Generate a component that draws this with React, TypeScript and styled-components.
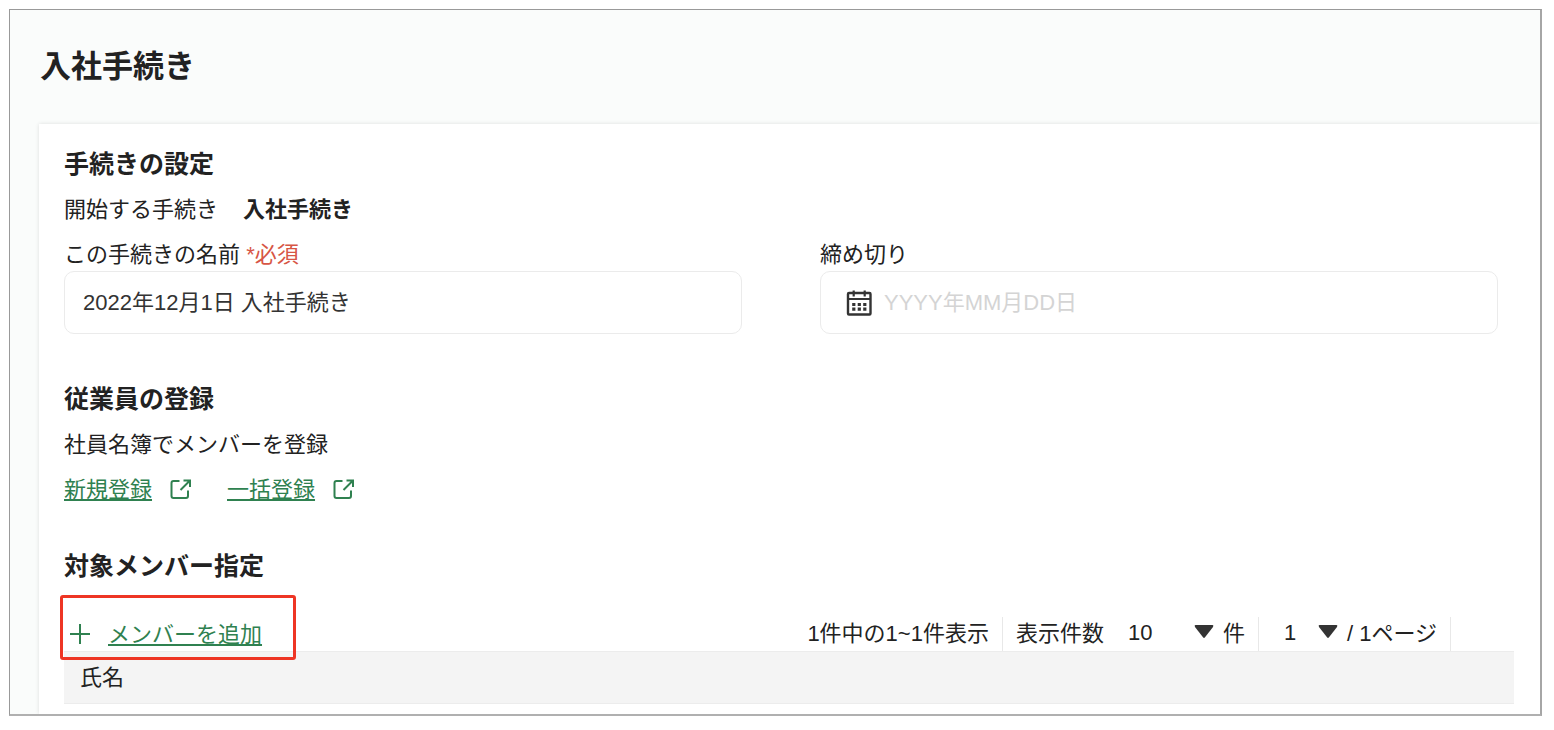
import React from "react";
import styled, { createGlobalStyle } from "styled-components";

const GlobalStyle = createGlobalStyle`
  *, *::before, *::after { box-sizing: border-box; }
  body {
    margin: 0;
    background: #fff;
    color: #222;
    font-family: "Liberation Sans", "Noto Sans CJK JP", sans-serif;
    font-size: 22px;
    line-height: 33px;
  }
  input, select, button { font: inherit; color: inherit; }
`;

const Frame = styled.main`
  margin: 9px 12px 14px 9px;
  border: 1px solid #999;
  border-right: 2px solid #a6a6a6;
  border-bottom: 2px solid #b0b0b0;
  background: #fafcfb;
  overflow: hidden;
`;

const Header = styled.header`
  padding: 33px 30px;
`;

const PageTitle = styled.h1`
  margin: 0;
  font-size: 31px;
  line-height: 48px;
  font-weight: 700;
`;

const Card = styled.div`
  margin-left: 29px;
  padding: 24px 26px 10px 25px;
  background: #fff;
  box-shadow: 0 0 4px rgba(0, 0, 0, 0.12);
`;

const Section = styled.section<{ $space: number }>`
  display: flex;
  flex-direction: column;
  gap: 12px;
  margin-bottom: ${(p) => p.$space}px;
`;

const SectionTitle = styled.h2`
  margin: 0;
  font-size: 25px;
  line-height: 33px;
  font-weight: 700;
`;

const Text = styled.p`
  margin: 0;
`;

const Summary = styled.dl`
  display: flex;
  gap: 25px;
  margin: 0;

  dd {
    margin: 0;
    font-weight: 700;
  }
`;

const Fields = styled.div`
  display: flex;
  gap: 78px;
  margin-right: 16px;
`;

const Field = styled.div`
  flex: 1;
  min-width: 0;
`;

const Label = styled.label`
  display: block;
`;

const Required = styled.span`
  color: #d75645;
`;

const InputBox = styled.div<{ $indent: number }>`
  display: flex;
  align-items: center;
  gap: 12px;
  height: 63px;
  padding: 0 18px 0 ${(p) => p.$indent}px;
  border: 1px solid #ebebeb;
  border-radius: 10px;
  background: #fff;

  svg { flex: none; }
`;

const Input = styled.input`
  flex: 1;
  min-width: 0;
  padding: 0;
  border: 0;
  outline: 0;
  background: none;
  color: #333;

  &::placeholder {
    color: #d4d4d4;
    opacity: 1;
  }
`;

const Links = styled.nav`
  display: flex;
  gap: 36px;
`;

const IconLink = styled.a`
  display: flex;
  align-items: center;
  gap: 18px;
  color: #2f8150;
  text-decoration: none;

  span {
    text-decoration: underline;
    text-decoration-thickness: 2px;
    text-underline-offset: 2px;
  }
`;

const Toolbar = styled.div`
  display: flex;
  justify-content: space-between;
  align-items: flex-end;
  padding-right: 63px;
`;

const AddArea = styled.div`
  position: relative;
  padding-left: 5px;
`;

const Highlight = styled.div`
  position: absolute;
  inset: -23px -34px -9px -4px;
  border: 3px solid #ee3524;
  border-radius: 3px;
  pointer-events: none;
`;

const AddButton = styled.button`
  display: flex;
  align-items: center;
  gap: 18px;
  padding: 0;
  border: 0;
  background: none;
  color: #2f8150;
  cursor: pointer;

  span {
    text-decoration: underline;
    text-decoration-thickness: 2px;
    text-underline-offset: 2px;
  }
`;

const Pager = styled.div`
  display: flex;
`;

const PagerItem = styled.div`
  display: flex;
  height: 34px;
  line-height: 34px;
  padding: 0 13px;
  border-right: 1px solid #e8e8e8;
  white-space: nowrap;
`;

const SelectWrap = styled.div<{ $width: number }>`
  position: relative;
  width: ${(p) => p.$width}px;
  margin-right: 9px;

  svg {
    position: absolute;
    top: 8px;
    right: 0;
    pointer-events: none;
  }
`;

const Select = styled.select<{ $indent: number }>`
  appearance: none;
  display: block;
  width: 100%;
  height: 32px;
  line-height: 32px;
  padding: 0 0 0 ${(p) => p.$indent}px;
  border: 0;
  outline: 0;
  background: none;
`;

const Table = styled.table`
  width: 100%;
  border-collapse: collapse;

  th {
    height: 52px;
    padding: 0 16px;
    border-top: 1px solid #ececec;
    border-bottom: 1px solid #ececec;
    background: #f4f4f4;
    font-weight: 400;
    text-align: left;
  }
`;

const CalendarIcon = () => (
  <svg width="26" height="26" viewBox="0 0 26 26" fill="none" stroke="#333" strokeWidth="2" aria-hidden="true">
    <rect x="2" y="3" width="22.500" height="21.500" rx="1" strokeWidth="2.400" />
    <path d="M2 9h22.500" />
    <path d="M7.700 .5v6M18.700 .5v6" strokeWidth="2.200" />
    <path d="M6.200 14.500h3.200M11.700 14.500h3.200M17.200 14.500h3.200M6.200 19.200h3.200M11.700 19.200h3.200M17.200 19.200h3.200" strokeWidth="3.200" />
  </svg>
);

const ExternalIcon = () => (
  <svg width="21" height="21" viewBox="0 0 21 21" fill="none" stroke="currentColor" strokeWidth="2" aria-hidden="true">
    <path d="M9.500 2H3.500Q1.500 2 1.500 4V17Q1.500 19 3.500 19H16Q18 19 18 17V11.500" />
    <path d="M13.500 1.500H20V8M19.500 2L10.500 11" />
  </svg>
);

const PlusIcon = () => (
  <svg width="21" height="21" viewBox="0 0 21 21" stroke="currentColor" strokeWidth="2" aria-hidden="true">
    <path d="M11 0V20M1 10H21" />
  </svg>
);

const Caret = () => (
  <svg width="20" height="14" viewBox="0 0 20 14" fill="#333" aria-hidden="true">
    <path d="M1.500 0H18.500Q20 .2 19 2L11 12.300Q10 13.500 9 12.300L1 2Q0 .2 1.500 0Z" />
  </svg>
);

export default function App() {
  return (
    <>
      <GlobalStyle />
      <Frame>
        <Header>
          <PageTitle>入社手続き</PageTitle>
        </Header>
        <Card>
          <Section $space={49}>
            <SectionTitle>手続きの設定</SectionTitle>
            <Summary>
              <dt>開始する手続き</dt>
              <dd>入社手続き</dd>
            </Summary>
            <Fields>
              <Field>
                <Label htmlFor="procedure-name">
                  この手続きの名前 <Required>*必須</Required>
                </Label>
                <InputBox $indent={18}>
                  <Input id="procedure-name" type="text" defaultValue="2022年12月1日 入社手続き" />
                </InputBox>
              </Field>
              <Field>
                <Label htmlFor="deadline">締め切り</Label>
                <InputBox $indent={25}>
                  <CalendarIcon />
                  <Input id="deadline" type="text" placeholder="YYYY年MM月DD日" />
                </InputBox>
              </Field>
            </Fields>
          </Section>

          <Section $space={44}>
            <SectionTitle>従業員の登録</SectionTitle>
            <Text>社員名簿でメンバーを登録</Text>
            <Links>
              <IconLink href="#new">
                <span>新規登録</span>
                <ExternalIcon />
              </IconLink>
              <IconLink href="#bulk">
                <span>一括登録</span>
                <ExternalIcon />
              </IconLink>
            </Links>
          </Section>

          <Section $space={34}>
            <SectionTitle>対象メンバー指定</SectionTitle>
          </Section>
          <Toolbar>
            <AddArea>
              <AddButton type="button">
                <PlusIcon />
                <span>メンバーを追加</span>
              </AddButton>
              <Highlight />
            </AddArea>
            <Pager>
              <PagerItem>1件中の1~1件表示</PagerItem>
              <PagerItem>
                <label htmlFor="page-size">表示件数</label>
                <SelectWrap $width={110}>
                  <Select id="page-size" $indent={24} defaultValue="10">
                    <option>10</option>
                    <option>20</option>
                    <option>50</option>
                  </Select>
                  <Caret />
                </SelectWrap>
                件
              </PagerItem>
              <PagerItem>
                <SelectWrap $width={66}>
                  <Select aria-label="ページ" $indent={12} defaultValue="1">
                    <option>1</option>
                  </Select>
                  <Caret />
                </SelectWrap>
                / 1ページ
              </PagerItem>
            </Pager>
          </Toolbar>
          <Table>
            <thead>
              <tr>
                <th scope="col">氏名</th>
              </tr>
            </thead>
          </Table>
        </Card>
      </Frame>
    </>
  );
}
